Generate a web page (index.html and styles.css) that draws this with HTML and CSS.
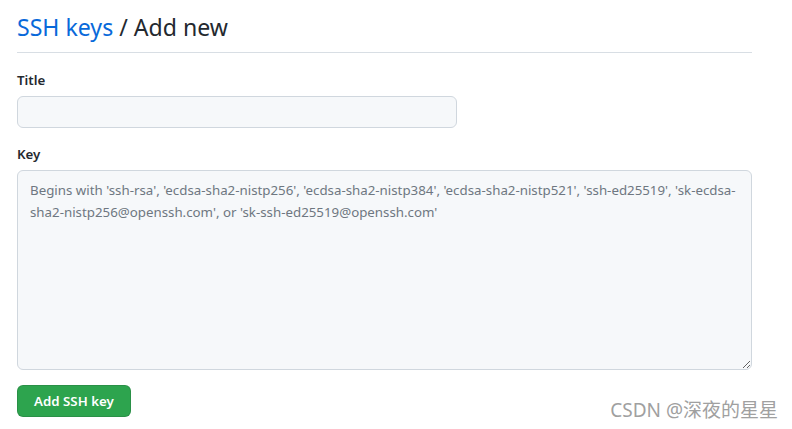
FILE: index.html
```html
<!DOCTYPE html>
<html lang="en">
<head>
<meta charset="utf-8">
<link rel="stylesheet" href="styles.css">
</head>
<body>
<main class="page">
  <div class="subhead">
    <h2 class="subhead-heading"><a class="crumb" href="#">SSH keys</a> / Add new</h2>
  </div>
  <form class="form">
    <div class="group">
      <label class="label">Title</label>
      <input class="input" type="text">
    </div>
    <div class="group group-key">
      <label class="label">Key</label>
      <textarea class="textarea" placeholder="Begins with 'ssh-rsa', 'ecdsa-sha2-nistp256', 'ecdsa-sha2-nistp384', 'ecdsa-sha2-nistp521', 'ssh-ed25519', 'sk-ecdsa-sha2-nistp256@openssh.com', or 'sk-ssh-ed25519@openssh.com'"></textarea>
    </div>
    <div class="actions">
      <button class="btn" type="button">Add SSH key</button>
    </div>
  </form>
</main>
<div class="watermark">CSDN @深夜的星星</div>
</body>
</html>
```
FILE: styles.css
```css
html, body {
  margin: 0;
  padding: 0;
  background: #ffffff;
}
body {
  font-family: "Noto Sans", "Open Sans", "Liberation Sans", sans-serif;
  color: #24292f;
  font-size: 13.3px;
  line-height: 21px;
}
.page {
  width: 735px;
  padding: 9px 0 0 17px;
}
.subhead {
  border-bottom: 1px solid #d8dee4;
  padding-bottom: 7px;
  margin-bottom: 17px;
}
.subhead-heading {
  margin: 0;
  font-size: 23.1px;
  font-weight: 400;
  line-height: 36px;
}
.crumb {
  color: #0969da;
  text-decoration: none;
}
.group {
  display: flex;
  flex-direction: column;
  margin-bottom: 16px;
}
.group-key {
  margin-bottom: 15px;
}
.label {
  font-weight: 600;
  font-size: 13.3px;
  line-height: 21px;
  margin-bottom: 5px;
}
.input, .textarea {
  box-sizing: border-box;
  background: #f6f8fa;
  border: 1px solid #d0d7de;
  border-radius: 6px;
  font-family: inherit;
  font-size: 13.3px;
  line-height: 22px;
  color: #24292f;
}
.input {
  width: 440px;
  height: 32px;
  padding: 5px 12px;
}
.textarea {
  width: 735px;
  height: 200px;
  padding: 8px 12px;
  resize: vertical;
}
.textarea::placeholder {
  color: #6e7781;
}
.btn {
  background: #2da44e;
  color: #ffffff;
  border: 1px solid rgba(27,31,36,0.15);
  border-radius: 6px;
  font-family: inherit;
  font-size: 13.3px;
  font-weight: 600;
  height: 32px;
  padding: 0 16px;
}
.watermark {
  position: absolute;
  right: 14px;
  top: 397px;
  font-family: "Noto Sans", "Noto Sans CJK SC", sans-serif;
  font-size: 19px;
  color: #a0a0a0;
  line-height: 26px;
}
```
